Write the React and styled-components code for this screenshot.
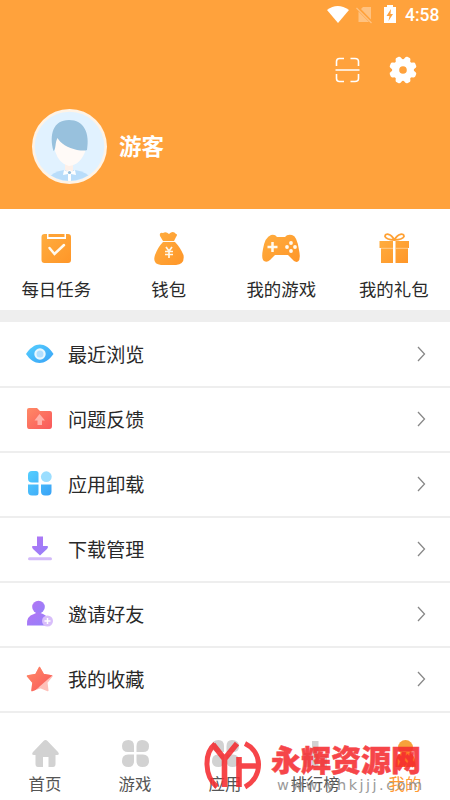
import React from 'react';
import styled, { createGlobalStyle } from 'styled-components';

const GlobalStyle = createGlobalStyle`
  * { box-sizing: border-box; }
  body { margin: 0; background: #fff; }
`;

const Screen = styled.div`
  position: relative;
  display: flex;
  flex-direction: column;
  width: 450px;
  height: 800px;
  overflow: hidden;
  background: #fff;
  color: #292929;
  font-family: "Noto Sans CJK SC", sans-serif;
  svg { display: block; flex: none; overflow: visible; }
`;

const Header = styled.header`
  height: 209px;
  background: #ffa23c;
  color: #fff;
`;

const StatusBar = styled.div`
  display: flex;
  justify-content: flex-end;
  align-items: center;
  height: 31px;
  padding-right: 10px;
`;

const Clock = styled.span`
  width: 35px;
  margin-left: 8px;
  font: 500 17.5px/31px Roboto, sans-serif;
  white-space: nowrap;
`;

const HeaderTools = styled.div`
  display: flex;
  justify-content: flex-end;
  align-items: center;
  gap: 29px;
  height: 78px;
  padding: 0 33px 1px 0;
`;

const Profile = styled.div`
  display: flex;
  align-items: center;
  gap: 12px;
  height: 75px;
  padding-left: 32px;
`;

const UserName = styled.h1`
  margin: 0;
  padding-bottom: 3px;
  font-size: 22.5px;
  font-weight: 700;
  line-height: 32px;
`;

const QuickActions = styled.nav`
  display: grid;
  grid-template-columns: repeat(4, 1fr);
  height: 101px;
`;

const QuickAction = styled.div`
  display: flex;
  flex-direction: column;
  align-items: center;
  padding-top: 20px;
  font-size: 17.4px;
  line-height: 24px;
  gap: 8px;
  white-space: nowrap;
`;

const Divider = styled.div`
  height: 12px;
  background: #eee;
`;

const Menu = styled.main`
  padding-top: 1px;
`;

const Row = styled.div`
  display: flex;
  align-items: center;
  height: 65px;
  padding: 0 24px 1px 25px;
  border-bottom: 2px solid #eee;
`;

const RowLabel = styled.span`
  flex: 1;
  margin-left: 13px;
  font-size: 19.1px;
  line-height: 28px;
`;

const TabBar = styled.nav`
  display: grid;
  grid-template-columns: repeat(5, 1fr);
  height: 87px;
`;

const Tab = styled.div`
  display: flex;
  flex-direction: column;
  align-items: center;
  padding-top: 26px;
  gap: 3px;
  color: ${({ $active }) => ($active ? '#ff9a35' : '#555')};
  font-size: 16.4px;
  line-height: 24px;
  white-space: nowrap;
`;

const Watermark = styled.div`
  position: absolute;
  left: 204px;
  top: 739px;
  display: flex;
  gap: 9px;
  opacity: 0.88;
`;

const WatermarkTitle = styled.div`
  height: 37px;
  color: #f52c30;
  font-size: 30px;
  font-weight: 900;
  line-height: 38px;
  -webkit-text-stroke: 0.5px #f52c30;
  white-space: nowrap;
`;

const WatermarkUrl = styled.div`
  padding-left: 6px;
  color: #8d8d8d;
  font: 14.5px/18px "DejaVu Sans", sans-serif;
  letter-spacing: 2.5px;
  white-space: nowrap;
`;

const gradientStops = {
  orange: ['#ffad3f', '#ff9628'],
  blue: ['#55cfff', '#39a2f6'],
  red: ['#ff8966', '#f9585b'],
  violet: ['#b374f4', '#9481fa'],
};

const Gradients = () => (
  <svg width="0" height="0">
    <defs>
      {Object.entries(gradientStops).map(([id, [from, to]]) => (
        <linearGradient key={id} id={id} x1="0" y1="0" x2="1" y2="1">
          <stop stopColor={from} />
          <stop offset="1" stopColor={to} />
        </linearGradient>
      ))}
    </defs>
  </svg>
);

const StatusIcons = () => (
  <svg width="70" height="31" viewBox="327 0 70 31" fill="#fff">
    <path d="M327 10Q337.5 2 349 10L338 23Z" />
    <g opacity=".35">
      <path d="M363 7H371V19.500L361 9Z" />
      <path d="M358.500 11.500L369 22H358.500Z" />
      <path d="M356.500 8L371.500 23" stroke="#fff" strokeWidth="1.200" />
    </g>
    <path fillRule="evenodd" d="M387 5H393V7H396V23H384V7H387ZM391 9L386.500 16H389.500L388.500 21L393 14H390.500Z" />
  </svg>
);

const ScanIcon = () => (
  <svg width="25" height="26" viewBox="0 0 25 26" fill="none" stroke="#fff" strokeWidth="1.600">
    <path d="M1.500 9V4.500Q1.500 1.500 4.500 1.500H9M15.500 1.500H20Q23.500 1.500 23.500 4.500V9M23.500 17V21.500Q23.500 24.500 20 24.500H15.500M9 24.500H4.500Q1.500 24.500 1.500 21.500V17M.500 13H24.500" />
  </svg>
);

const gearAngles = [22.5, 67.5, 112.5, 157.5, 202.5, 247.5, 292.5, 337.5];

const GearIcon = () => (
  <svg width="28" height="28" viewBox="0 0 28 28">
    <circle cx="14" cy="14" r="7.300" fill="none" stroke="#fff" strokeWidth="7" />
    {gearAngles.map((angle) => (
      <path key={angle} transform={`rotate(${angle} 14 14)`} fill="#fff" d="M10 5L11.300 1.200Q11.800 .2 13 .2H15Q16.200 .2 16.700 1.200L18 5Z" />
    ))}
  </svg>
);

const Avatar = () => (
  <svg width="75" height="75" viewBox="0 0 75 75">
    <defs><clipPath id="face"><circle cx="37.500" cy="37.500" r="34.500" /></clipPath></defs>
    <circle cx="37.500" cy="37.500" r="37.500" fill="#fff3e5" />
    <circle cx="37.500" cy="37.500" r="34.800" fill="#e1f2ff" />
    <g clipPath="url(#face)">
      <path d="M16 70Q20 63 32 61H43Q55 63 60 70L53 76H22Z" fill="#b9ddfa" />
      <path d="M33 54H41V62L37.500 64L33 61Z" fill="#fdf0e9" />
      <path d="M23 31L25 27Q38 38 54 40Q49 56 37 57Q27 55 23 42Z" fill="#fffaf7" />
      <path d="M21.500 42C17 26 21 11 37 11C52 11 58 24 55 41Q53 42 45 41C36 39 28 34 25.500 29C23 33 24 41 21.500 42Z" fill="#98c1dd" />
      <path d="M32 61L35 62.500L37.500 61L40 62.500L43 61L44 66L39 65V75H36V65L31 66Z" fill="#fff" />
      <circle cx="37.500" cy="63.500" r="1.600" fill="#98c1dd" />
    </g>
  </svg>
);

const quickIcons = {
  tasks: <>
    <path fill="url(#orange)" d="M8.500 5H11V10H30V5H32Q35 5 35 8V31Q35 34 32 34H8.500Q5.500 34 5.500 31V8Q5.500 5 8.500 5Z" />
    <path fill="#ffa336" d="M12.500 5H28.500V8H12.500Z" />
    <path d="M13.500 19L18.500 25L28 16" fill="none" stroke="#fffaf0" strokeWidth="2.500" strokeLinecap="round" />
  </>,
  wallet: <>
    <path fill="url(#orange)" d="M14 12L11 7Q10 3 14 4Q17 2 20 5Q24 1 27 5Q29 5 27 8L25 12ZM14 13H26Q31 18 34.500 26Q36 35 27 36H12Q3 35 6 26Q9 18 14 13Z" />
    <path d="M14 12.500H26" stroke="#fffaf0" />
    <path d="M17 18L20 22L23 18M16 22.500H24M16 25.500H24M20 22V29" stroke="#fff7e8" strokeWidth="1.700" fill="none" />
  </>,
  games: <>
    <path fill="url(#orange)" d="M10 6Q14 5 16 8H24Q26 5 31 6Q36 7 38 21Q40 30 37 32.500Q34 34 31 30L27 26H14L9 31Q6 34 3 32Q0 30 2 20Q4 8 10 6Z" />
    <path d="M11.500 13V23M6.500 18H16.500" stroke="#fffaf0" strokeWidth="2.500" />
    <g fill="#fffaf0"><circle cx="30" cy="14" r="1.900" /><circle cx="26" cy="18" r="1.900" /><circle cx="34" cy="18" r="1.900" /><circle cx="30" cy="22" r="1.900" /></g>
  </>,
  gift: <>
    <path fill="url(#orange)" d="M5.500 12H19V19H5.500ZM21.500 12H35V19H21.500ZM7 19H19V34H7ZM21.500 19H34V34H21.500Z" />
    <path d="M7 19.300H19M21.500 19.300H34" stroke="#ffd7a0" strokeWidth=".8" />
    <path fill="none" stroke="#ffa134" strokeWidth="1.800" d="M20.300 11C17 4 11 4 11 7.500Q12 10.500 20.300 11C24 4 30 4 30 7.500Q29 10.500 20.300 11" />
  </>,
};

const starPath = 'M14.500 3.500L18.500 10.500L27 12L21.800 18.500L22.800 26.500L15.500 23.500L7 26.500L8 18.500L2.500 12L10.800 10.500Z';

const rowIcons = {
  eye: <>
    <path fill="url(#blue)" d="M1 15C9 3 20 2 28.500 15C20 27 9 27 1 15Z" />
    <circle cx="15" cy="15" r="4.600" fill="#b1dfff" stroke="#e8f8ff" strokeWidth="2.200" />
  </>,
  folder: <>
    <path fill="url(#red)" d="M4 4H12L15 7H25Q27 7 27 9V22Q27 25 24.500 25H4Q2 25 2 22V6Q2 4 4 4Z" />
    <path fill="#ffb1aa" d="M14.500 10L20 16.500H17V21H12.500V16.500H9.500Z" />
  </>,
  apps: <>
    <path fill="url(#blue)" d="M7 2H11Q13.500 2 13.500 4.500V13.500H7Q3 13.500 3 9.500V6Q3 2 7 2ZM3 15.500H13.500V24Q13.500 26.500 11 26.500H7Q3 26.500 3 22.500ZM16 15.500H26.500V22.500Q26.500 26.500 22.500 26.500H20Q16 26.500 16 22.500Z" />
    <circle cx="21.300" cy="7.700" r="5.400" fill="#9bdeff" />
  </>,
  download: <>
    <path fill="url(#violet)" d="M12 2.500H18V12H22Q24 12 22 15L15 21.500L8 15Q6 12 8 12H12Z" />
    <path stroke="#d3baf9" strokeWidth="3" strokeLinecap="round" d="M4.500 24.800H25.500" />
  </>,
  invite: <>
    <circle cx="13.500" cy="8" r="6.300" fill="url(#violet)" />
    <path fill="url(#violet)" d="M2 26.500Q1 17 9 15L13 13L18 15Q24 17 23 26.500Z" />
    <circle cx="22.500" cy="22" r="5.500" fill="#d8befa" />
    <path d="M19.500 22H25.500M22.500 19V25" stroke="#fff" strokeWidth="1.500" />
  </>,
  star: <>
    <defs><clipPath id="starShade"><path d="M0 0H30V9L6 30H0Z" /></clipPath></defs>
    <path d={starPath} fill="#ffc0b9" stroke="#ffc0b9" strokeWidth="1.500" strokeLinejoin="round" />
    <path d={starPath} clipPath="url(#starShade)" fill="url(#red)" stroke="url(#red)" strokeWidth="1.500" strokeLinejoin="round" />
  </>,
};

const tabIcons = {
  home: <path d="M12.500 2Q14.500 0 16.500 2L27 13Q29 16 26 16H24.500V25Q24.500 28 22 28H17.500V18H12V28H7Q4.500 28 4.500 25V16H3Q0 16 2 13Z" />,
  clover: <path d="M7.500 1Q13 1 13 7V13H7Q1 13 1 7Q1 1 7.500 1ZM21 1Q28 1 28 7.500Q28 13 22 13H15.500V7Q15.500 1 21 1ZM7 15.500H13V22Q13 28 7.500 28Q1 28 1 22Q1 15.500 7 15.500ZM15.500 15.500H22Q28 15.500 28 22Q28 28 21.500 28Q15.500 28 15.500 22Z" />,
  ranks: <path d="M11 2H17.500V28H11ZM3 14H9V28H3ZM19.500 17H26V28H19.500Z" />,
  person: <>
    <circle cx="14.500" cy="8.500" r="7.500" />
    <path fill="#ff7224" d="M4.500 28Q4 13 14.500 13Q25 13 24.500 28Z" />
  </>,
};

const actions = [
  ['tasks', '每日任务'], ['wallet', '钱包'], ['games', '我的游戏'], ['gift', '我的礼包'],
];
const rows = [
  ['eye', '最近浏览'], ['folder', '问题反馈'], ['apps', '应用卸载'],
  ['download', '下载管理'], ['invite', '邀请好友'], ['star', '我的收藏'],
];
const tabs = [
  ['home', '首页'], ['clover', '游戏'], ['clover', '应用'], ['ranks', '排行榜'], ['person', '我的'],
];

const Emblem = () => (
  <svg width="58" height="52" viewBox="0 0 58 52" fill="none" stroke="#f52c30" strokeWidth="5.600" strokeLinejoin="round">
    <path d="M11 5C0 14 0 37 13 48M41 4.500C59 13 59 38 41 48" strokeWidth="5" />
    <path d="M9 5.500L20.500 20V48M33 4.500L20.500 20M35 18V48M35 27H54" />
  </svg>
);

export default function App() {
  return (
    <Screen>
      <GlobalStyle />
      <Header>
        <StatusBar><StatusIcons /><Clock>4:58</Clock></StatusBar>
        <HeaderTools><ScanIcon /><GearIcon /></HeaderTools>
        <Profile><Avatar /><UserName>游客</UserName></Profile>
      </Header>
      <QuickActions>
        {actions.map(([icon, label]) => (
          <QuickAction key={label}>
            <svg width="40" height="40" viewBox="0 0 40 40">{quickIcons[icon]}</svg>
            {label}
          </QuickAction>
        ))}
      </QuickActions>
      <Divider />
      <Menu>
        {rows.map(([icon, label]) => (
          <Row key={label}>
            <svg width="30" height="30" viewBox="0 0 30 30">{rowIcons[icon]}</svg>
            <RowLabel>{label}</RowLabel>
            <svg width="9" height="16" viewBox="0 0 9 16" fill="none" stroke="#888" strokeWidth="1.300"><path d="M1 1L7.500 8L1 15" /></svg>
          </Row>
        ))}
      </Menu>
      <TabBar>
        {tabs.map(([icon, label]) => (
          <Tab key={label} $active={icon === 'person'}>
            <svg width="29" height="29" viewBox="0 0 29 29" fill={icon === 'person' ? '#f7a13b' : '#d2d2d2'}>{tabIcons[icon]}</svg>
            {label}
          </Tab>
        ))}
      </TabBar>
      <Watermark>
        <Emblem />
        <div>
          <WatermarkTitle>永辉资源网</WatermarkTitle>
          <WatermarkUrl>www.yhkjjj.com</WatermarkUrl>
        </div>
      </Watermark>
      <Gradients />
    </Screen>
  );
}
